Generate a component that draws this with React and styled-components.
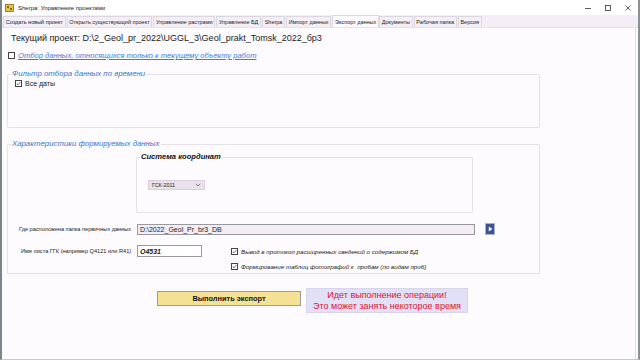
import React from 'react';
import styled, { createGlobalStyle } from 'styled-components';

const GlobalStyle = createGlobalStyle`
  html, body {
    margin: 0;
    padding: 0;
    background: #ffffff;
  }
  body {
    font-family: "Liberation Sans", Arial, sans-serif;
  }
`;

const Window = styled.div`
  width: 640px;
  height: 360px;
  box-sizing: border-box;
  border-left: 2px solid #7d858a;
  border-right: 2px solid #8a9094;
  border-bottom: 1px solid #c8c8cc;
  display: flex;
  flex-direction: column;
  background: #fdfbfe;
  overflow: hidden;
`;

const TitleBar = styled.div`
  height: 15px;
  display: flex;
  align-items: center;
  background: #ffffff;
  padding-left: 3px;
  gap: 4px;
`;

const Title = styled.span`
  font-size: 6px;
  color: #222;
  flex: 1;
`;

const Controls = styled.div`
  display: flex;
  align-items: center;
`;

const ControlBtn = styled.div`
  width: 20px;
  height: 15px;
  display: flex;
  align-items: center;
  justify-content: center;
`;

const TabStrip = styled.div`
  height: 12px;
  display: flex;
  align-items: flex-end;
  background: #f4eff6;
  border-bottom: 1px solid #e6e0ea;
  padding-left: 1px;
`;

const Tab = styled.div`
  height: ${p => (p.$active ? 12 : 11)}px;
  padding: 0 1.7px;
  display: flex;
  align-items: center;
  box-sizing: border-box;
  font-size: 5.5px;
  color: #222;
  white-space: nowrap;
  background: ${p => (p.$active ? '#fdfbfe' : '#f4eff6')};
  border: 1px solid #dcd6e0;
  border-bottom: none;
  margin-right: ${p => (p.$active ? 0 : 1)}px;
`;

const Page = styled.div`
  flex: 1;
  display: flex;
  flex-direction: column;
  padding: 4px 0 0 5px;
  border-right: 1px solid #dcdce0;
  margin-right: 2px;
`;

const ProjectLine = styled.div`
  font-size: 9px;
  color: #222;
  margin-left: 4px;
  height: 12px;
  line-height: 12px;
`;

const Row = styled.div`
  display: flex;
  align-items: center;
  gap: ${p => p.$gap || 3}px;
  margin-left: ${p => p.$indent || 0}px;
  margin-top: ${p => p.$top || 0}px;
`;

const BoxOuter = styled.div`
  width: ${p => p.$size}px;
  height: ${p => p.$size}px;
  border: 1px solid #444;
  box-sizing: border-box;
  background: #fff;
  display: flex;
  align-items: center;
  justify-content: center;
`;

const Check = ({ checked, size = 7 }) => (
  <BoxOuter $size={size}>
    {checked && (
      <svg width={size - 2} height={size - 2} viewBox="0 0 10 10">
        <path d="M1.5 5.2 L4 7.6 L8.6 2.4" fill="none" stroke="#222" strokeWidth="1.4" />
      </svg>
    )}
  </BoxOuter>
);

const LinkText = styled.span`
  font-size: 7.6px;
  font-style: italic;
  color: #3b7fd4;
  text-decoration: underline;
`;

const GroupBox = styled.fieldset`
  margin: ${p => p.$top || 0}px 0 0 ${p => p.$left || 0}px;
  padding: 0;
  width: ${p => p.$width}px;
  height: ${p => p.$height}px;
  box-sizing: border-box;
  border: 1px solid #e4e2e8;
  border-radius: 1px;
`;

const Legend = styled.legend`
  font-size: ${p => p.$size || 7.8}px;
  font-style: italic;
  font-weight: ${p => (p.$dark ? 'bold' : 'normal')};
  color: ${p => (p.$dark ? '#111' : '#3478c8')};
  padding: 0 1px;
  margin-left: 3px;
  line-height: 8px;
`;

const SmallLabel = styled.span`
  font-size: ${p => p.$size || 7}px;
  color: #222;
  font-style: ${p => (p.$italic ? 'italic' : 'normal')};
`;

const Combo = styled.div`
  width: 57px;
  height: 10px;
  box-sizing: border-box;
  background: #e9e1ee;
  border: 1px solid #d8cedd;
  display: flex;
  align-items: center;
  justify-content: space-between;
  padding: 0 3px;
  font-size: 5.4px;
  color: #222;
  margin: 19px 0 0 11px;
`;

const FieldRow = styled.div`
  display: flex;
  align-items: ${p => (p.$top ? 'flex-start' : 'center')};
  margin-top: ${p => p.$gap || 0}px;
`;

const FieldLabel = styled.div`
  width: 129px;
  box-sizing: border-box;
  padding-left: ${p => p.$pad || 11}px;
  padding-top: ${p => p.$padTop || 0}px;
  font-size: 5.6px;
  color: #222;
  white-space: nowrap;
`;

const TextInput = styled.div`
  width: ${p => p.$width}px;
  height: ${p => p.$height || 12}px;
  box-sizing: border-box;
  border: 1px solid #9a9a9e;
  background: ${p => p.$bg || '#fff'};
  display: flex;
  align-items: center;
  padding-left: 2px;
  font-size: 7px;
  color: #222;
  font-style: ${p => (p.$bold ? 'italic' : 'normal')};
  font-weight: ${p => (p.$bold ? 'bold' : 'normal')};
`;

const GoButton = styled.div`
  width: 10px;
  height: 12px;
  margin-left: 10px;
  background: #3c5494;
  border: 1px solid #a8b2d0;
  box-sizing: border-box;
  display: flex;
  align-items: center;
  justify-content: center;
`;

const Options = styled.div`
  display: flex;
  flex-direction: column;
  gap: 8px;
  margin-left: 29px;
  margin-top: 3px;
`;

const ActionRow = styled.div`
  display: flex;
  align-items: flex-start;
  margin: 14px 0 0 150px;
  gap: 5px;
`;

const ExportButton = styled.div`
  width: 144px;
  height: 15px;
  margin-top: 3px;
  box-sizing: border-box;
  background: #f4e193;
  border: 1px solid #9c9c9c;
  display: flex;
  align-items: center;
  justify-content: center;
  font-size: 7.4px;
  font-weight: bold;
  color: #111;
`;

const Message = styled.div`
  width: 162px;
  height: 25px;
  box-sizing: border-box;
  background: #e2e0f6;
  border: 1px solid #d8d4ea;
  display: flex;
  flex-direction: column;
  align-items: center;
  justify-content: center;
  font-size: 9px;
  line-height: 10.5px;
  color: #e0122e;
`;

const tabs = [
  'Создать новый проект',
  'Открыть существующий проект',
  'Управление растрами',
  'Управление БД',
  'Sherpa',
  'Импорт данных',
  'Экспорт данных',
  'Документы',
  'Рабочая папка',
  'Версия',
];

const AppIcon = () => (
  <svg width="9" height="8" viewBox="0 0 9 8">
    <rect x="0.5" y="0.5" width="8" height="7" fill="#e8c04a" stroke="#8a6a20" strokeWidth="0.8" />
    <rect x="2" y="2" width="2" height="2" fill="#8a6a20" />
    <rect x="5" y="4" width="2" height="2" fill="#8a6a20" />
  </svg>
);

export default function App() {
  return (
    <>
      <GlobalStyle />
      <Window>
        <TitleBar>
          <AppIcon />
          <Title>Sherpa: Управление проектами</Title>
          <Controls>
            <ControlBtn>
              <svg width="8" height="8" viewBox="0 0 8 8">
                <path d="M1 4.5 H7" stroke="#333" strokeWidth="0.8" />
              </svg>
            </ControlBtn>
            <ControlBtn>
              <svg width="8" height="8" viewBox="0 0 8 8">
                <rect x="1.5" y="1.5" width="5" height="5" fill="none" stroke="#333" strokeWidth="0.8" />
              </svg>
            </ControlBtn>
            <ControlBtn>
              <svg width="8" height="8" viewBox="0 0 8 8">
                <path d="M1.5 1.5 L6.5 6.5 M6.5 1.5 L1.5 6.5" stroke="#333" strokeWidth="0.8" />
              </svg>
            </ControlBtn>
          </Controls>
        </TitleBar>
        <TabStrip>
          {tabs.map(t => (
            <Tab key={t} $active={t === 'Экспорт данных'}>
              {t}
            </Tab>
          ))}
        </TabStrip>
        <Page>
          <ProjectLine>Текущий проект: D:\2_Geol_pr_2022\UGGL_3\Geol_prakt_Tomsk_2022_бр3</ProjectLine>
          <Row $top={7} $indent={1} $gap={3}>
            <Check size={7} />
            <LinkText>Отбор данных, относящихся только к текущему объекту работ</LinkText>
          </Row>

          <GroupBox $top={10} $width={533} $height={58}>
            <Legend>Фильтр отбора данных по времени</Legend>
            <Row $indent={7} $top={2} $gap={3}>
              <Check checked size={7} />
              <SmallLabel>Все даты</SmallLabel>
            </Row>
          </GroupBox>

          <GroupBox $top={12} $width={533} $height={134}>
            <Legend>Характеристики формируемых данных</Legend>
            <GroupBox $left={128} $top={5} $width={337} $height={60}>
              <Legend $dark $size={7.6}>Система координат</Legend>
              <Combo>
                <span>ГСК-2011</span>
                <svg width="6" height="4" viewBox="0 0 6 4">
                  <path d="M0.8 0.8 L3 3 L5.2 0.8" fill="none" stroke="#555" strokeWidth="0.7" />
                </svg>
              </Combo>
            </GroupBox>
            <FieldRow $gap={10}>
              <FieldLabel>Где расположена папка первичных данных</FieldLabel>
              <TextInput $width={338} $height={11} $bg="#f3ecf4">
                D:\2022_Geol_Pr_br3_DB
              </TextInput>
              <GoButton>
                <svg width="5" height="6" viewBox="0 0 5 6">
                  <path d="M0.8 0.5 L4.4 3 L0.8 5.5 Z" fill="#ffffff" />
                </svg>
              </GoButton>
            </FieldRow>
            <FieldRow $gap={10} $top>
              <FieldLabel $pad={13} $padTop={3}>
                Имя листа ГГК (например Q4121 или R41)
              </FieldLabel>
              <TextInput $width={65} $height={12} $bold>
                O4531
              </TextInput>
              <Options>
                <Row $gap={3}>
                  <Check checked size={7} />
                  <SmallLabel $size={6.2} $italic>
                    Вывод в протокол расширенных сведений о содержимом БД
                  </SmallLabel>
                </Row>
                <Row $gap={3}>
                  <Check checked size={7} />
                  <SmallLabel $size={6.2} $italic>
                    Формирование таблиц фотографий к&nbsp; пробам (по видам проб)
                  </SmallLabel>
                </Row>
              </Options>
            </FieldRow>
          </GroupBox>

          <ActionRow>
            <ExportButton>Выполнить экспорт</ExportButton>
            <Message>
              <span>Идет выполнение операции!</span>
              <span>Это может занять некоторое время</span>
            </Message>
          </ActionRow>
        </Page>
      </Window>
    </>
  );
}
